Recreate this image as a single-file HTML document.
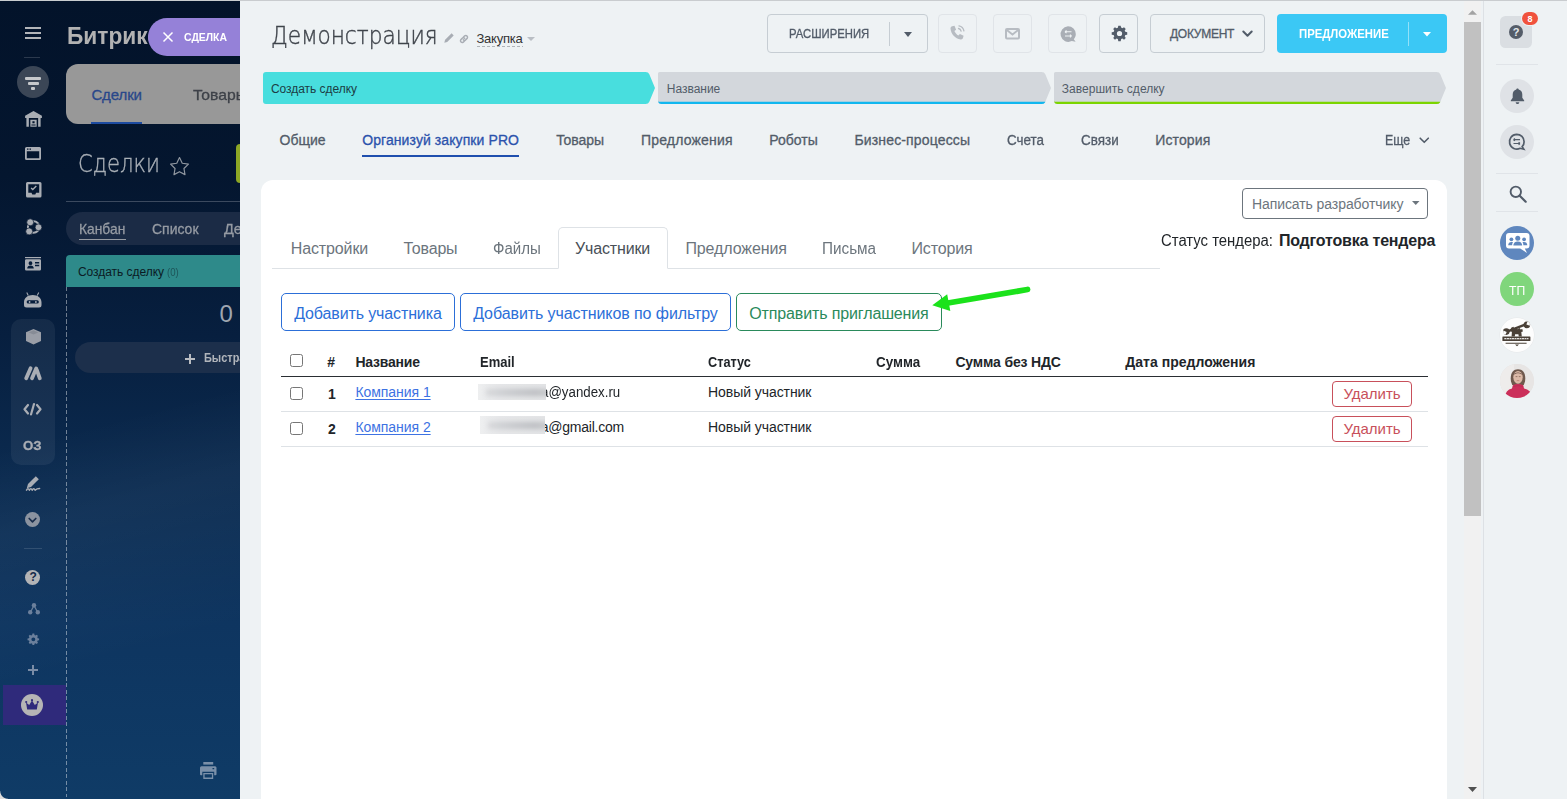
<!DOCTYPE html>
<html lang="ru"><head><meta charset="utf-8"><title>Демонстрация — Сделки</title>
<style>
html,body{margin:0;padding:0}
body{width:1567px;height:799px;overflow:hidden;position:relative;background:#eef2f4;font-family:"Liberation Sans",sans-serif}
.a{position:absolute;box-sizing:border-box}
.t{position:absolute;white-space:pre;display:block}
svg{display:block;overflow:visible}
</style></head><body>
<div class="a" id="left" style="left:0;top:0;width:240px;height:799px;overflow:hidden;background:linear-gradient(180deg,#03132a 0%,#04162f 22%,#071f3f 42%,#0b2b50 60%,#0e3560 78%,#0f3b66 100%)"><div class="a" style="left:0px;top:0px;width:240px;height:799px;background:linear-gradient(165deg,transparent 52%,rgba(255,255,255,.035) 62%,rgba(255,255,255,.02) 70%,transparent 80%)"></div>
<div class="a" style="left:25px;top:27px;width:16px;height:2px;background:#b3b5b9"></div>
<div class="a" style="left:25px;top:32px;width:16px;height:2px;background:#b3b5b9"></div>
<div class="a" style="left:25px;top:37px;width:16px;height:2px;background:#b3b5b9"></div>
<div class="a" style="left:24px;top:57px;width:16px;height:1px;background:rgba(255,255,255,.16)"></div>
<div class="a" style="left:17px;top:66px;width:32px;height:32px;background:#3b4656;border-radius:50%"></div>
<div class="a" style="left:25px;top:77px;width:16px;height:2.6px;background:#c6c8cb;border-radius:1px"></div>
<div class="a" style="left:27.5px;top:82px;width:11px;height:2.6px;background:#c6c8cb;border-radius:1px"></div>
<div class="a" style="left:30.7px;top:87px;width:4.6px;height:2.6px;background:#c6c8cb;border-radius:1px"></div>
<span class="t" style="left:67.00px;top:19.68px;font:700 24px/31px 'Liberation Sans', sans-serif;color:#b2b2b2;transform:scaleX(0.9469);transform-origin:0 50%;">Битрикс</span>
<div class="a" style="left:148px;top:18px;width:112px;height:38px;background:#9581d8;border-radius:19px 0 0 19px"></div>
<svg class="a" style="left:163px;top:32px;" width="10" height="10" viewBox="0 0 10 10"><path d="M0.5 0.5L9.5 9.5M9.5 0.5L0.5 9.5" stroke="#fff" stroke-width="1.5" fill="none"/></svg>
<span class="t" style="left:184.00px;top:30.19px;font:700 11px/14px 'Liberation Sans', sans-serif;color:#fff;transform:scaleX(0.9480);transform-origin:0 50%;">СДЕЛКА</span>
<div class="a" style="left:66px;top:64px;width:194px;height:60px;background:#989898;border-radius:12px 0 0 12px"></div>
<span class="t" style="left:91.40px;top:84.80px;font:400 15px/20px 'Liberation Sans', sans-serif;color:#29478a;letter-spacing:-0.105px;-webkit-text-stroke:.3px;">Сделки</span>
<span class="t" style="left:192.50px;top:84.80px;font:400 15px/20px 'Liberation Sans', sans-serif;color:#3d4148;transform:scaleX(1.0463);transform-origin:0 50%;-webkit-text-stroke:.3px;">Товары</span>
<div class="a" style="left:91px;top:122px;width:51px;height:2px;background:#1d4ba0"></div>
<span class="t" style="left:78.00px;top:147.85px;font:200 25px/32px 'DejaVu Sans', 'Liberation Sans', sans-serif;color:#aab0b7;transform:scaleX(0.8448);transform-origin:0 50%;-webkit-text-stroke:.35px;">Сделки</span>
<svg class="a" style="left:170.2px;top:156.5px;" width="19" height="18.5" viewBox="2 2 20 19.500"><path d="M12 2.6l2.9 6 6.5.9-4.7 4.6 1.1 6.5L12 17.5l-5.8 3.1 1.1-6.5L2.6 9.5l6.5-.9z" fill="none" stroke="#9097a0" stroke-width="1.250" stroke-linejoin="round"/></svg>
<div class="a" style="left:236px;top:144px;width:24px;height:39px;background:#8da725;border-radius:4px 0 0 4px"></div>
<div class="a" style="left:66px;top:201px;width:174px;height:1px;background:rgba(255,255,255,.22)"></div>
<div class="a" style="left:66px;top:212px;width:194px;height:33px;background:#1b2b45;border-radius:16.5px 0 0 16.5px"></div>
<span class="t" style="left:79.30px;top:219.10px;font:400 15px/20px 'Liberation Sans', sans-serif;color:#969ba3;transform:scaleX(0.9214);transform-origin:0 50%;-webkit-text-stroke:.3px;">Канбан</span>
<div class="a" style="left:79px;top:238.5px;width:47px;height:1.5px;background:#969ba3"></div>
<span class="t" style="left:151.80px;top:219.10px;font:400 15px/20px 'Liberation Sans', sans-serif;color:#969ba3;transform:scaleX(0.9315);transform-origin:0 50%;-webkit-text-stroke:.3px;">Список</span>
<span class="t" style="left:224.00px;top:219.10px;font:400 15px/20px 'Liberation Sans', sans-serif;color:#969ba3;transform:scaleX(0.9684);transform-origin:0 50%;-webkit-text-stroke:.3px;">Дела</span>
<div class="a" style="left:66px;top:255px;width:194px;height:32px;background:#2e8a8a;border-radius:4px 0 0 0"></div>
<span class="t" style="left:78.00px;top:264.14px;font:400 12px/16px 'Liberation Sans', sans-serif;color:#0b1b24;letter-spacing:-0.047px;">Создать сделку</span>
<span class="t" style="left:166.70px;top:265.19px;font:400 11px/14px 'Liberation Sans', sans-serif;color:#1d5559;transform:scaleX(0.8697);transform-origin:0 50%;">(0)</span>
<div class="a" style="left:66px;top:287px;width:1px;height:510px;background:repeating-linear-gradient(180deg,rgba(255,255,255,.42) 0 4px,transparent 4px 6.5px)"></div>
<span class="t" style="left:219.60px;top:298.18px;font:400 24px/31px 'Liberation Sans', sans-serif;color:#9fa6b0;">0</span>
<div class="a" style="left:75px;top:342px;width:185px;height:31px;background:#1c2f4b;border-radius:15.5px 0 0 15.5px"></div>
<div class="a" style="left:185px;top:358px;width:10px;height:2px;background:#b9bcc1"></div>
<div class="a" style="left:189px;top:354px;width:2px;height:10px;background:#b9bcc1"></div>
<span class="t" style="left:203.70px;top:350.34px;font:700 12px/16px 'Liberation Sans', sans-serif;color:#b1b5bb;transform:scaleX(0.9121);transform-origin:0 50%;">Быстрая сделка</span>
<div class="a" style="left:11px;top:319px;width:44px;height:146px;background:rgba(255,255,255,.06);border-radius:10px"></div>
<svg class="a" style="left:24.5px;top:110.5px;" width="17" height="15.8" viewBox="0 0 17 16"><path fill="#a9adb4" fill-rule="evenodd" d="M8.500 0L17 4.800V7h-1.300v9H1.300V7H0V4.800zM3.800 7.200V16h9.400V7.200z"/><path fill="#a9adb4" fill-rule="evenodd" d="M5.300 8.800h6.400V16H5.300zM7.400 10.300v2.200h2.200v-2.200zM6.400 13.800v.9h4.200v-.9z"/></svg>
<svg class="a" style="left:25px;top:147px;" width="16" height="13" viewBox="0 0 16 13"><path fill="#a9adb4" fill-rule="evenodd" d="M1.5 0h13A1.5 1.5 0 0116 1.5v10a1.5 1.5 0 01-1.5 1.5h-13A1.5 1.5 0 010 11.500v-10A1.500 1.500 0 011.500 0zM1.800 4.200v7h12.400v-7zM2 1.500v1.300h1.500V1.500zM4.500 1.500v1.300H6V1.500z"/></svg>
<svg class="a" style="left:25.5px;top:181.5px;" width="15.5" height="15.5" viewBox="0 0 15.500 15.500"><path fill="#a9adb4" fill-rule="evenodd" d="M1.500 0h12.500a1.500 1.500 0 011.500 1.500v12.500a1.500 1.500 0 01-1.500 1.500H1.500A1.500 1.500 0 010 14V1.500A1.500 1.500 0 011.500 0zM2.300 2.300v8.500h3.200l.8 1.700h3l.8-1.700h3.100V2.300zM6.800 8.600L4.600 6.400l1-1 1.200 1.200 3-3 1 1z"/></svg>
<svg class="a" style="left:25px;top:218px;" width="17" height="17" viewBox="0 0 17 17"><circle cx="8.600" cy="9" r="5.700" fill="none" stroke="#a9adb4" stroke-width="2.100"/><g fill="#a9adb4" stroke="#04162f" stroke-width=".7"><circle cx="5.200" cy="4.300" r="3.500"/><circle cx="13.500" cy="9.300" r="3.400"/><circle cx="4.200" cy="13.400" r="3.500"/></g></svg>
<svg class="a" style="left:25px;top:257px;" width="16" height="13.5" viewBox="0 0 16 13.500"><path fill="#a9adb4" d="M0 0h16v1.200H0z"/><path fill="#a9adb4" fill-rule="evenodd" d="M1.200 2.300h13.600A1.200 1.200 0 0116 3.500v8.800a1.200 1.200 0 01-1.200 1.200H1.200A1.200 1.200 0 010 12.300V3.500a1.200 1.200 0 011.200-1.200zM5.500 4.300a1.900 1.900 0 100 3.800 1.900 1.900 0 000-3.800zM2.200 11.600h6.600c0-2-1.400-3-3.300-3s-3.300 1-3.300 3zM10 5v1.400h4.200V5zM10 7.800v1.400h4.200V7.800z"/></svg>
<svg class="a" style="left:23.5px;top:291.5px;" width="17.5" height="15.5" viewBox="0 0 17.500 15.500"><path fill="#a9adb4" d="M3.200 0.300l1.500 3-.9.500-1.500-3zM14.300 0.300l-1.500 3 .9.500 1.500-3z"/><path fill="#a9adb4" fill-rule="evenodd" d="M8.750 3c4.800 0 8.750 2.800 8.750 7.300v2.700a2.500 2.500 0 01-2.500 2.500H2.500A2.500 2.500 0 010 13v-2.700C0 5.800 3.950 3 8.750 3zM4.200 8.200a1.500 1.500 0 00-1.500 1.500v.3a1.500 1.500 0 001.500 1.500h9.100a1.500 1.500 0 001.500-1.500v-.3a1.500 1.500 0 00-1.500-1.500zM5.600 9.100a.9.900 0 100 1.800.9.900 0 000-1.800zM11.900 9.100a.9.900 0 100 1.800.9.900 0 000-1.800z"/></svg>
<svg class="a" style="left:25.5px;top:329px;" width="15" height="15.5" viewBox="0 0 15 15.500"><path fill="#9a9ea7" d="M7.500 0L15 3.300v8.700L7.500 15.500 0 12V3.300z"/><path fill="#878c96" d="M7.500 1.300l4.800 2.100-4.800 2.100-4.800-2.100z"/></svg>
<svg class="a" style="left:23.5px;top:365.5px;" width="18" height="14.5" viewBox="0 0 18 14.500"><g stroke="#a9adb4" stroke-width="3.800" stroke-linecap="round" fill="none"><path d="M2.200 12.300L6.600 2.200"/><path d="M8 12.300L12.200 2.400"/><path d="M12.800 3.800L15.800 12.300"/></g></svg>
<svg class="a" style="left:23px;top:403px;" width="19" height="12.5" viewBox="0 0 19 12.500"><g stroke="#a9adb4" stroke-width="2.200" fill="none" stroke-linecap="round" stroke-linejoin="round"><path d="M5 2L1.500 6.250 5 10.500"/><path d="M14 2l3.500 4.250L14 10.500"/><path d="M11 1L8 11.500"/></g></svg>
<span class="t" style="left:22.80px;top:436.52px;font:700 13.5px/18px 'Liberation Sans', sans-serif;color:#a9adb4;transform:scaleX(0.9806);transform-origin:0 50%;-webkit-text-stroke:.3px;">ОЗ</span>
<svg class="a" style="left:25px;top:476px;" width="16" height="15" viewBox="0 0 16 15"><path fill="#a9adb4" d="M10.800 0.200l3 3L6 11 1.800 12.200 3 8z"/><path fill="none" stroke="#a9adb4" stroke-width="1.500" stroke-linecap="round" stroke-linejoin="round" d="M1.500 14.200c1-1.900 2-1.900 2.900 0 1-1.900 1.900-1.900 2.800 0 1-1.900 2-1.900 2.900 0 1.300-1.200 2.700-1.600 4.500-1.600"/></svg>
<div class="a" style="left:25px;top:512px;width:15px;height:15px;background:#8b93a0;border-radius:50%"></div>
<svg class="a" style="left:28px;top:516.5px;" width="9" height="6.5" viewBox="0 0 9 6.500"><path d="M1.200 1.500L4.500 4.800 7.800 1.500" fill="none" stroke="#1a2e4c" stroke-width="1.700" stroke-linecap="round" stroke-linejoin="round"/></svg>
<div class="a" style="left:24px;top:548px;width:18px;height:1px;background:rgba(255,255,255,.13)"></div>
<div class="a" style="left:25px;top:569.5px;width:15px;height:15px;background:#b3b4b6;border-radius:50%"></div>
<span class="t" style="left:29.50px;top:569.14px;font:700 12px/16px 'Liberation Sans', sans-serif;color:#12294a;">?</span>
<svg class="a" style="left:27.5px;top:602.5px;" width="12" height="11.5" viewBox="0 0 12 11.500"><g fill="#6c809c"><circle cx="6" cy="2.300" r="2.200"/><circle cx="2.200" cy="9.200" r="2.200"/><circle cx="9.800" cy="9.200" r="2.200"/></g><path d="M6 2.500L2.500 9M6 2.500L9.500 9" stroke="#6c809c" stroke-width="1.300" fill="none"/></svg>
<svg class="a" style="left:26.8px;top:632.8px;" width="12.7" height="12.7" viewBox="0 0 24 24"><path fill="#6c809c" fill-rule="evenodd" d="M10.300 1h3.400l.5 2.700c.7.200 1.300.5 1.900.9l2.300-1.500 2.400 2.400-1.500 2.300c.4.600.7 1.200.9 1.900l2.700.5v3.400l-2.700.5c-.2.700-.5 1.300-.9 1.900l1.500 2.300-2.400 2.400-2.300-1.500c-.6.400-1.200.7-1.900.9l-.5 2.700h-3.400l-.5-2.700c-.7-.2-1.300-.5-1.900-.9l-2.300 1.500-2.400-2.400 1.500-2.300c-.4-.6-.7-1.200-.9-1.900L1 13.700v-3.400l2.700-.5c.2-.7.5-1.300.9-1.900L3.100 5.600l2.400-2.400 2.300 1.500c.6-.4 1.200-.7 1.900-.9zM12 8.300a3.700 3.700 0 100 7.400 3.700 3.700 0 000-7.400z"/></svg>
<div class="a" style="left:28px;top:669px;width:10px;height:1.5px;background:#7a8ca6"></div>
<div class="a" style="left:32.25px;top:665px;width:1.5px;height:10px;background:#7a8ca6"></div>
<div class="a" style="left:3px;top:685px;width:63px;height:40px;background:#2f2a7b"></div>
<div class="a" style="left:21px;top:694px;width:22px;height:22px;background:#b5b5b5;border-radius:50%"></div>
<svg class="a" style="left:25px;top:698.5px;" width="14" height="12" viewBox="0 0 14 12"><path fill="#2f2a7b" d="M1 3.500l3.200 2.600L7 1.500l2.800 4.600L13 3.500l-1.200 7H2.200z"/><circle cx="1.200" cy="3" r="1.100" fill="#2f2a7b"/><circle cx="7" cy="1.200" r="1.100" fill="#2f2a7b"/><circle cx="12.800" cy="3" r="1.100" fill="#2f2a7b"/></svg>
<svg class="a" style="left:200px;top:762px;" width="16.5" height="17" viewBox="0 0 16.500 17"><g fill="#7b90a9"><path d="M3.300 0h9.900v2.600H3.300z"/><path fill-rule="evenodd" d="M1.500 4.300h13.500a1.500 1.500 0 011.500 1.500v6.400a1 1 0 01-1 1h-1.300V9.800H2.300v3.400H1a1 1 0 01-1-1V5.800a1.500 1.500 0 011.500-1.500zM12.500 6v1.200h1.700V6z"/><path fill-rule="evenodd" d="M3.300 11h9.900v6H3.300zM4.600 12.300v3.200h7.300v-3.200z"/></g></svg>
<div class="a" style="left:0px;top:791px;width:8px;height:8px;background:radial-gradient(circle at 100% 0,transparent 7.300px,#dcdcdc 8.200px)"></div></div>
<div class="a" id="main" style="left:0;top:0;width:1484px;height:799px;overflow:hidden;pointer-events:none"><span class="t" style="left:271.20px;top:20.50px;font:200 24px/31px 'DejaVu Sans', 'Liberation Sans', sans-serif;color:#3f444b;transform:scaleX(0.9022);transform-origin:0 50%;-webkit-text-stroke:.4px;">Демонстрация</span>
<svg class="a" style="left:443.5px;top:33px;" width="10" height="10" viewBox="0 0 10 10"><path fill="#a8adb4" d="M7.600 0.300l2.100 2.100-6.500 6.500L0.300 9.700l.8-2.900z"/></svg>
<svg class="a" style="left:459px;top:33.5px;" width="10" height="10" viewBox="0 0 10 10"><g fill="none" stroke="#a8adb4" stroke-width="1.500" stroke-linecap="round"><path d="M4.300 3.200l1.400-1.400a1.800 1.800 0 012.500 2.500L6.800 5.700a1.800 1.800 0 01-2.500 0"/><path d="M5.700 6.800L4.300 8.200a1.800 1.800 0 01-2.500-2.500l1.400-1.400a1.800 1.800 0 012.500 0"/></g></svg>
<span class="t" style="left:476.50px;top:29.90px;font:400 13px/17px 'Liberation Sans', sans-serif;color:#333;letter-spacing:-0.229px;">Закупка</span>
<div class="a" style="left:476.5px;top:45.5px;width:46.5px;height:1px;background:repeating-linear-gradient(90deg,#b0b4b8 0 3px,transparent 3px 5px)"></div>
<svg class="a" style="left:527px;top:37px;" width="8" height="4" viewBox="0 0 8 4"><path d="M0 0h8L4 4z" fill="#b9bec4"/></svg>
<div class="a" style="left:767px;top:14px;width:161px;height:39px;border:1px solid #c6cdd3;border-radius:4px;"></div>
<span class="t" style="left:788.60px;top:26.04px;font:400 12px/16px 'Liberation Sans', sans-serif;color:#525c69;transform:scaleX(0.9413);transform-origin:0 50%;-webkit-text-stroke:.3px;">РАСШИРЕНИЯ</span>
<div class="a" style="left:889px;top:21.5px;width:1px;height:24.5px;background:#c6cdd3"></div>
<svg class="a" style="left:904px;top:31.5px;" width="8" height="5" viewBox="0 0 8 5"><path d="M0 0h8L4 5z" fill="#525c69"/></svg>
<div class="a" style="left:938px;top:14px;width:39px;height:39px;border:1px solid #e0e4e8;border-radius:4px;"></div>
<svg class="a" style="left:949px;top:25px;" width="16" height="17" viewBox="0 0 16 17"><path fill="#b7bcc2" d="M3.200 1.200L5.500 0.800l1.600 3.900-1.700 1.300c.8 1.900 2.200 3.500 4 4.500l1.500-1.600 3.700 1.900-.6 2.300c-.3 1-1.300 1.500-2.300 1.300C6 13.500 2 9.300 1.500 3.500 1.400 2.500 2.100 1.500 3.200 1.200z"/><g fill="none" stroke="#b7bcc2" stroke-width="1.300" stroke-linecap="round"><path d="M9.500 3.500c1.300.3 2.300 1.300 2.600 2.600"/><path d="M10 0.900c2.500.5 4.400 2.400 4.900 4.900"/></g></svg>
<div class="a" style="left:993px;top:14px;width:39px;height:39px;border:1px solid #e0e4e8;border-radius:4px;"></div>
<svg class="a" style="left:1005px;top:27.5px;" width="15" height="11.5" viewBox="0 0 15 11.500"><rect x="1" y="1" width="13" height="9.500" rx="1" fill="none" stroke="#b7bcc2" stroke-width="2"/><path d="M1.500 1.800l6 4.700 6-4.700" fill="none" stroke="#b7bcc2" stroke-width="1.800"/></svg>
<div class="a" style="left:1048px;top:14px;width:38.5px;height:39px;border:1px solid #e0e4e8;border-radius:4px;"></div>
<svg class="a" style="left:1059.5px;top:25.5px;" width="16.5" height="16.5" viewBox="0 0 16.500 16.500"><path fill="#a9aeb5" d="M8 0.300a7.800 7.800 0 017.800 7.800c0 2-.7 3.800-2 5.200l1.800 2.500-3.800-.7A7.800 7.800 0 118 0.300z"/><g stroke="#eef2f4" stroke-width="1.100" fill="none"><path d="M5 5.800h6.500M5 5.800l1.500-1.300M5 5.800l1.500 1.300"/><path d="M11.500 10H5M11.500 10L10 8.700M11.500 10L10 11.300"/></g></svg>
<div class="a" style="left:1099px;top:14px;width:38.5px;height:39px;border:1px solid #c6cdd3;border-radius:4px;"></div>
<svg class="a" style="left:1110.5px;top:24.9px;" width="17" height="17" viewBox="0 0 24 24"><path fill="#525c69" fill-rule="evenodd" d="M10.300 1h3.400l.5 2.700c.7.200 1.300.5 1.900.9l2.300-1.500 2.400 2.400-1.500 2.300c.4.600.7 1.200.9 1.900l2.700.5v3.400l-2.700.5c-.2.700-.5 1.300-.9 1.900l1.500 2.300-2.400 2.400-2.300-1.500c-.6.400-1.200.7-1.900.9l-.5 2.700h-3.400l-.5-2.700c-.7-.2-1.300-.5-1.900-.9l-2.300 1.500-2.400-2.400 1.500-2.300c-.4-.6-.7-1.200-.9-1.900L1 13.700v-3.400l2.700-.5c.2-.7.5-1.300.9-1.900L3.100 5.600l2.400-2.400 2.300 1.500c.6-.4 1.200-.7 1.900-.9zM12 8.300a3.700 3.700 0 100 7.400 3.700 3.700 0 000-7.400z"/></svg>
<div class="a" style="left:1150px;top:14px;width:115px;height:39px;border:1px solid #c6cdd3;border-radius:4px;"></div>
<span class="t" style="left:1170.00px;top:26.04px;font:400 12px/16px 'Liberation Sans', sans-serif;color:#525c69;letter-spacing:-0.260px;-webkit-text-stroke:.3px;">ДОКУМЕНТ</span>
<svg class="a" style="left:1241.5px;top:30px;" width="11" height="8" viewBox="0 0 11 8"><path d="M1.300 1.500L5.500 5.800 9.700 1.500" fill="none" stroke="#525c69" stroke-width="2" stroke-linecap="round" stroke-linejoin="round"/></svg>
<div class="a" style="left:1277px;top:14px;width:170px;height:39px;background:#3bc8f5;border-radius:4px"></div>
<span class="t" style="left:1298.60px;top:26.04px;font:700 12px/16px 'Liberation Sans', sans-serif;color:#fff;transform:scaleX(0.9450);transform-origin:0 50%;">ПРЕДЛОЖЕНИЕ</span>
<div class="a" style="left:1408px;top:22px;width:1px;height:24px;background:rgba(255,255,255,.45)"></div>
<svg class="a" style="left:1423px;top:32px;" width="8" height="4.5" viewBox="0 0 8 4.500"><path d="M0 0h8L4 4.500z" fill="#fff"/></svg>
<svg class="a" style="left:263px;top:72px;" width="392" height="32" viewBox="0 0 392 32"><path d="M3 0H382.5 Q385.5 0 386.3 2.200 L392 16 L386.3 29.800 Q385.5 32 382.5 32 H3 Q0 32 0 29 V3 Q0 0 3 0z" fill="#48dede"/></svg>
<span class="t" style="left:271.00px;top:80.84px;font:400 12px/16px 'Liberation Sans', sans-serif;color:#1c3d44;letter-spacing:-0.047px;">Создать сделку</span>
<svg class="a" style="left:658px;top:72px;" width="393" height="32" viewBox="0 0 393 32"><path d="M1.5 0H383.5 Q386.5 0 387.3 2.200 L393 16 L387.3 29.800 Q386.5 32 383.5 32 H3 Q0 32 0 29 V1.5 Q0 0 1.5 0z" fill="#d3d7dc"/><path d="M0 28.500 Q0.300 32 3.500 32 H383.5 Q386 32 387 30.500 L387.3 29.800 H0.600z" fill="#11b7ef"/></svg>
<span class="t" style="left:666.80px;top:80.84px;font:400 12px/16px 'Liberation Sans', sans-serif;color:#525c69;letter-spacing:-0.018px;">Название</span>
<svg class="a" style="left:1054px;top:72px;" width="392" height="32" viewBox="0 0 392 32"><path d="M1.5 0H382.5 Q385.5 0 386.3 2.200 L392 16 L386.3 29.800 Q385.5 32 382.5 32 H3 Q0 32 0 29 V1.5 Q0 0 1.5 0z" fill="#d3d7dc"/><path d="M0 28.500 Q0.300 32 3.500 32 H382.5 Q385 32 386 30.500 L386.3 29.800 H0.600z" fill="#7bd500"/></svg>
<span class="t" style="left:1061.80px;top:80.84px;font:400 12px/16px 'Liberation Sans', sans-serif;color:#525c69;letter-spacing:0.014px;">Завершить сделку</span>
<span class="t" style="left:279.50px;top:131.15px;font:400 14px/18px 'Liberation Sans', sans-serif;color:#525c69;letter-spacing:-0.012px;-webkit-text-stroke:.3px;">Общие</span>
<span class="t" style="left:362.20px;top:131.15px;font:400 14px/18px 'Liberation Sans', sans-serif;color:#2b52ac;letter-spacing:0.088px;-webkit-text-stroke:.3px;">Организуй закупки PRO</span>
<div class="a" style="left:362px;top:155px;width:157px;height:2px;background:#1f4fae"></div>
<span class="t" style="left:556.20px;top:131.15px;font:400 14px/18px 'Liberation Sans', sans-serif;color:#525c69;letter-spacing:-0.034px;-webkit-text-stroke:.3px;">Товары</span>
<span class="t" style="left:641.00px;top:131.15px;font:400 14px/18px 'Liberation Sans', sans-serif;color:#525c69;letter-spacing:0.175px;-webkit-text-stroke:.3px;">Предложения</span>
<span class="t" style="left:769.30px;top:131.15px;font:400 14px/18px 'Liberation Sans', sans-serif;color:#525c69;letter-spacing:-0.017px;-webkit-text-stroke:.3px;">Роботы</span>
<span class="t" style="left:854.50px;top:131.15px;font:400 14px/18px 'Liberation Sans', sans-serif;color:#525c69;letter-spacing:0.144px;-webkit-text-stroke:.3px;">Бизнес-процессы</span>
<span class="t" style="left:1007.00px;top:131.15px;font:400 14px/18px 'Liberation Sans', sans-serif;color:#525c69;transform:scaleX(0.9583);transform-origin:0 50%;-webkit-text-stroke:.3px;">Счета</span>
<span class="t" style="left:1080.50px;top:131.15px;font:400 14px/18px 'Liberation Sans', sans-serif;color:#525c69;transform:scaleX(0.9613);transform-origin:0 50%;-webkit-text-stroke:.3px;">Связи</span>
<span class="t" style="left:1155.30px;top:131.15px;font:400 14px/18px 'Liberation Sans', sans-serif;color:#525c69;letter-spacing:0.117px;-webkit-text-stroke:.3px;">История</span>
<span class="t" style="left:1385.20px;top:131.15px;font:400 14px/18px 'Liberation Sans', sans-serif;color:#525c69;transform:scaleX(0.8842);transform-origin:0 50%;-webkit-text-stroke:.3px;">Еще</span>
<svg class="a" style="left:1418.5px;top:136.5px;" width="10.5" height="7" viewBox="0 0 10.500 7"><path d="M1.200 1.200L5.250 5.300 9.300 1.200" fill="none" stroke="#525c69" stroke-width="1.600" stroke-linecap="round" stroke-linejoin="round"/></svg>
<div class="a" style="left:261px;top:180px;width:1186px;height:640px;background:#fff;border-radius:12px 12px 0 0"></div>
<div class="a" style="left:1242px;top:188px;width:186px;height:31px;border:1px solid #6c757d;border-radius:4px"></div>
<span class="t" style="left:1252.00px;top:194.85px;font:400 14px/18px 'Liberation Sans', sans-serif;color:#6c757d;letter-spacing:-0.085px;">Написать разработчику</span>
<svg class="a" style="left:1411.5px;top:201px;" width="7.5" height="4" viewBox="0 0 7.500 4"><path d="M0 0h7.500L3.750 4z" fill="#6c757d"/></svg>
<span class="t" style="left:1161.00px;top:229.56px;font:400 16px/21px 'Liberation Sans', sans-serif;color:#212529;transform:scaleX(0.9303);transform-origin:0 50%;">Статус тендера:</span>
<span class="t" style="left:1278.90px;top:229.56px;font:700 16px/21px 'Liberation Sans', sans-serif;color:#212529;letter-spacing:-0.186px;">Подготовка тендера</span>
<div class="a" style="left:272px;top:268px;width:888px;height:1px;background:#dee2e6"></div>
<div class="a" style="left:558px;top:227px;width:110px;height:42px;border:1px solid #dee2e6;border-bottom:1px solid #fff;border-radius:5px 5px 0 0;background:#fff"></div>
<span class="t" style="left:290.70px;top:237.76px;font:400 16px/21px 'Liberation Sans', sans-serif;color:#6c757d;letter-spacing:-0.107px;">Настройки</span>
<span class="t" style="left:403.50px;top:237.76px;font:400 16px/21px 'Liberation Sans', sans-serif;color:#6c757d;letter-spacing:-0.189px;">Товары</span>
<span class="t" style="left:492.50px;top:237.76px;font:400 16px/21px 'Liberation Sans', sans-serif;color:#6c757d;transform:scaleX(0.9401);transform-origin:0 50%;">Файлы</span>
<span class="t" style="left:575.00px;top:237.76px;font:400 16px/21px 'Liberation Sans', sans-serif;color:#495057;letter-spacing:-0.142px;">Участники</span>
<span class="t" style="left:685.40px;top:237.76px;font:400 16px/21px 'Liberation Sans', sans-serif;color:#6c757d;letter-spacing:-0.096px;">Предложения</span>
<span class="t" style="left:822.20px;top:237.76px;font:400 16px/21px 'Liberation Sans', sans-serif;color:#6c757d;transform:scaleX(0.9546);transform-origin:0 50%;">Письма</span>
<span class="t" style="left:911.50px;top:237.76px;font:400 16px/21px 'Liberation Sans', sans-serif;color:#6c757d;letter-spacing:-0.141px;">История</span>
<div class="a" style="left:281px;top:293px;width:174px;height:38px;border:1px solid #2c6fd8;border-radius:5px"></div>
<span class="t" style="left:294.20px;top:302.66px;font:400 16px/21px 'Liberation Sans', sans-serif;color:#2c6fd8;letter-spacing:-0.126px;">Добавить участника</span>
<div class="a" style="left:460px;top:293px;width:271px;height:38px;border:1px solid #2c6fd8;border-radius:5px"></div>
<span class="t" style="left:473.20px;top:302.66px;font:400 16px/21px 'Liberation Sans', sans-serif;color:#2c6fd8;letter-spacing:-0.083px;">Добавить участников по фильтру</span>
<div class="a" style="left:736px;top:293px;width:206px;height:38px;border:1px solid #2a8a5b;border-radius:5px"></div>
<span class="t" style="left:749.30px;top:302.66px;font:400 16px/21px 'Liberation Sans', sans-serif;color:#2a8a5b;letter-spacing:-0.134px;">Отправить приглашения</span>
<svg class="a" style="left:925px;top:280px;" width="110" height="40" viewBox="925 280 110 40"><path d="M1027.500 289.500L945 303.500" stroke="#1be21b" stroke-width="5.800" stroke-linecap="round" fill="none"/><path d="M932.300 305.300L947.200 294.200L950.300 311z" fill="#1be21b"/></svg>
<div class="a" style="left:290px;top:354px;width:13px;height:13px;border:1px solid #767676;border-radius:2.500px;background:#fff"></div>
<span class="t" style="left:327.20px;top:353.15px;font:700 14px/18px 'Liberation Sans', sans-serif;color:#212529;">#</span>
<span class="t" style="left:355.40px;top:353.15px;font:700 14px/18px 'Liberation Sans', sans-serif;color:#212529;letter-spacing:-0.213px;">Название</span>
<span class="t" style="left:480.30px;top:353.15px;font:700 14px/18px 'Liberation Sans', sans-serif;color:#212529;transform:scaleX(0.9288);transform-origin:0 50%;">Email</span>
<span class="t" style="left:707.90px;top:353.15px;font:700 14px/18px 'Liberation Sans', sans-serif;color:#212529;transform:scaleX(0.9091);transform-origin:0 50%;">Статус</span>
<span class="t" style="left:875.80px;top:353.15px;font:700 14px/18px 'Liberation Sans', sans-serif;color:#212529;transform:scaleX(0.9602);transform-origin:0 50%;">Сумма</span>
<span class="t" style="left:955.40px;top:353.15px;font:700 14px/18px 'Liberation Sans', sans-serif;color:#212529;letter-spacing:-0.151px;">Сумма без НДС</span>
<span class="t" style="left:1125.30px;top:353.15px;font:700 14px/18px 'Liberation Sans', sans-serif;color:#212529;letter-spacing:0.019px;">Дата предложения</span>
<div class="a" style="left:281px;top:376px;width:1147px;height:1.3px;background:#2a2e33"></div>
<div class="a" style="left:290px;top:387px;width:13px;height:13px;border:1px solid #767676;border-radius:2.500px;background:#fff"></div>
<span class="t" style="left:328.00px;top:385.45px;font:700 14px/18px 'Liberation Sans', sans-serif;color:#212529;">1</span>
<span class="t" style="left:355.40px;top:383.15px;font:400 14px/18px 'Liberation Sans', sans-serif;color:#3d72e3;letter-spacing:-0.050px;text-decoration:underline;text-underline-offset:1.500px;">Компания 1</span>
<span class="t" style="left:540.80px;top:383.15px;font:400 14px/18px 'Liberation Sans', sans-serif;color:#212529;transform:scaleX(0.9487);transform-origin:0 50%;">a@yandex.ru</span>
<div class="a" style="left:478px;top:384px;width:68px;height:16.3px;overflow:hidden;background:linear-gradient(90deg,#eeeff0,#e6e7e9 30%,#e3e4e6 100%)"><div class="a" style="left:8px;right:-6px;top:5.15px;height:7px;background:linear-gradient(90deg,#d6d7da,#c6c8cb 40%,#bcbec2 75%,#c9cbce);filter:blur(2.600px)"></div></div>
<span class="t" style="left:708.00px;top:383.15px;font:400 14px/18px 'Liberation Sans', sans-serif;color:#212529;letter-spacing:-0.060px;">Новый участник</span>
<div class="a" style="left:1332px;top:381px;width:80px;height:26px;border:1px solid #c8505b;border-radius:4px"></div>
<span class="t" style="left:1343.40px;top:384.10px;font:400 15px/20px 'Liberation Sans', sans-serif;color:#c8505b;letter-spacing:-0.014px;">Удалить</span>
<div class="a" style="left:281px;top:411px;width:1147px;height:1px;background:#dee2e6"></div>
<div class="a" style="left:290px;top:422px;width:13px;height:13px;border:1px solid #767676;border-radius:2.500px;background:#fff"></div>
<span class="t" style="left:328.00px;top:420.45px;font:700 14px/18px 'Liberation Sans', sans-serif;color:#212529;">2</span>
<span class="t" style="left:355.40px;top:418.15px;font:400 14px/18px 'Liberation Sans', sans-serif;color:#3d72e3;letter-spacing:-0.050px;text-decoration:underline;text-underline-offset:1.500px;">Компания 2</span>
<span class="t" style="left:540.80px;top:418.15px;font:400 14px/18px 'Liberation Sans', sans-serif;color:#212529;letter-spacing:-0.240px;">a@gmail.com</span>
<div class="a" style="left:479.5px;top:416px;width:65.5px;height:18px;overflow:hidden;background:linear-gradient(90deg,#eeeff0,#e6e7e9 30%,#e3e4e6 100%)"><div class="a" style="left:8px;right:-6px;top:6px;height:7px;background:linear-gradient(90deg,#d6d7da,#c6c8cb 40%,#bcbec2 75%,#c9cbce);filter:blur(2.600px)"></div></div>
<span class="t" style="left:708.00px;top:418.15px;font:400 14px/18px 'Liberation Sans', sans-serif;color:#212529;letter-spacing:-0.060px;">Новый участник</span>
<div class="a" style="left:1332px;top:416px;width:80px;height:26px;border:1px solid #c8505b;border-radius:4px"></div>
<span class="t" style="left:1343.40px;top:419.10px;font:400 15px/20px 'Liberation Sans', sans-serif;color:#c8505b;letter-spacing:-0.014px;">Удалить</span>
<div class="a" style="left:281px;top:446px;width:1147px;height:1px;background:#dee2e6"></div>
<div class="a" style="left:1464px;top:1px;width:17px;height:798px;background:#f1f1f1"></div>
<div class="a" style="left:1464px;top:22px;width:17px;height:494px;background:#c1c1c1"></div>
<svg class="a" style="left:1468px;top:10px;" width="9" height="4.8" viewBox="0 0 9 4.500"><path d="M0 4.500h9L4.500 0z" fill="#a3a3a3"/></svg>
<svg class="a" style="left:1468px;top:787px;" width="9" height="5" viewBox="0 0 9 5"><path d="M0 0h9L4.500 5z" fill="#505050"/></svg></div>
<div class="a" style="left:1483px;top:0px;width:1px;height:799px;background:#dde1e5"></div>
<div class="a" style="left:1500px;top:16px;width:32px;height:32px;background:#dadee2;border-radius:5.500px"></div>
<div class="a" style="left:1508.6px;top:24.5px;width:14.6px;height:14.6px;background:#545c68;border-radius:50%"></div>
<span class="t" style="left:1512.70px;top:25.09px;font:700 11px/14px 'Liberation Sans', sans-serif;color:#e4e8eb;">?</span>
<div class="a" style="left:1522px;top:12px;width:16px;height:13px;background:#f0523d;border-radius:6.500px;box-shadow:0 0 0 1px #eef2f4"></div>
<span class="t" style="left:1527.50px;top:12.78px;font:700 9px/12px 'Liberation Sans', sans-serif;color:#fff;">8</span>
<div class="a" style="left:1495.5px;top:64px;width:42px;height:1px;background:#e0e4e8"></div>
<div class="a" style="left:1500px;top:79px;width:34px;height:34px;background:#dfe2e6;border-radius:50%"></div>
<svg class="a" style="left:1509.5px;top:87.5px;" width="15" height="17" viewBox="0 0 15 17"><path fill="#525c69" d="M7.500 0.500c.7 0 1.200.5 1.200 1.100 2.300.6 3.600 2.600 3.600 5v3.200l1.900 2.600v.8H.8v-.8l1.900-2.600V6.600c0-2.400 1.300-4.400 3.600-5 0-.6.500-1.100 1.200-1.100zM5.700 14.300h3.600c0 1-.8 1.800-1.800 1.800s-1.800-.8-1.800-1.800z"/></svg>
<div class="a" style="left:1500px;top:125px;width:34px;height:34px;background:#dfe2e6;border-radius:50%"></div>
<svg class="a" style="left:1508px;top:133px;" width="18" height="18" viewBox="0 0 18 18"><path fill="none" stroke="#525c69" stroke-width="1.700" d="M8.700 1.300a7.400 7.400 0 017.400 7.400c0 1.900-.7 3.600-1.900 4.900l1.600 2.600-3.600-.9A7.400 7.400 0 118.700 1.300z"/><g stroke="#525c69" stroke-width="1.200" fill="none"><path d="M5.500 6.700h6.500M5.500 6.700l1.400-1.200M5.500 6.700l1.400 1.200"/><path d="M12 10.500H5.500M12 10.500l-1.400-1.200M12 10.500l-1.400 1.200"/></g></svg>
<div class="a" style="left:1495.5px;top:173px;width:42px;height:1px;background:#e0e4e8"></div>
<svg class="a" style="left:1508.5px;top:185px;" width="18" height="18" viewBox="0 0 18 18"><circle cx="6.800" cy="6.800" r="5.200" fill="none" stroke="#525c69" stroke-width="1.900"/><path d="M10.700 10.700l6 6" stroke="#525c69" stroke-width="2.200" stroke-linecap="round"/></svg>
<div class="a" style="left:1495.5px;top:211px;width:42px;height:1px;background:#e0e4e8"></div>
<div class="a" style="left:1500px;top:226px;width:34px;height:34px;background:#5f87be;border-radius:50%"></div>
<svg class="a" style="left:1505.5px;top:233px;" width="23.5" height="21" viewBox="0 0 23.500 21"><path fill="#fff" d="M3 0h17.500a3 3 0 013 3v9.500a3 3 0 01-3 3h-1.700l2.200 4.500-6.800-4.500H3a3 3 0 01-3-3V3a3 3 0 013-3z"/><g fill="#5f87be"><circle cx="11.750" cy="5.300" r="2.500"/><path d="M7.300 12.600c0-2.700 1.800-4.200 4.450-4.200s4.450 1.500 4.450 4.200z"/><circle cx="5.400" cy="6.300" r="1.900"/><path d="M2.200 12.200c0-2.100 1.300-3.300 3.200-3.300.6 0 1.100.1 1.600.4-.6.800-.9 1.800-.9 2.900z"/><circle cx="18.100" cy="6.300" r="1.900"/><path d="M21.300 12.200c0-2.100-1.300-3.300-3.200-3.300-.6 0-1.100.1-1.600.4.600.8.900 1.800.9 2.900z"/></g></svg>
<div class="a" style="left:1500px;top:271.5px;width:34px;height:34px;background:#80d67c;border-radius:50%"></div>
<span class="t" style="left:1508.90px;top:282.10px;font:400 13px/17px 'Liberation Sans', sans-serif;color:#fff;transform:scaleX(0.9366);transform-origin:0 50%;">ТП</span>
<div class="a" style="left:1500px;top:318px;width:34px;height:34px;background:#fdfdfd;border-radius:50%;box-shadow:0 0 0 .5px #e6e8ea"></div>
<svg class="a" style="left:1500px;top:318px;" width="34" height="34" viewBox="0 0 34 34"><g fill="#4a4037"><path d="M7.500 14.800L25.500 7.800l-.9-2.300L6.600 12.500z"/><circle cx="6.300" cy="13.600" r="3.300"/><circle cx="26.800" cy="6.900" r="3.300"/><path d="M11.500 9.500l2-.8.600 1.500 2.300-1 .8 2 2.500-1.300.9 1.700 1.700-.5.600 2.300-1.600.7.500 4.300h-3l-.4-2.200h-3.300l-.3 2.200h-3.200l.3-4.500-2-1.300z"/><rect x="2.400" y="18.500" width="28" height="4.400" rx=".5"/><path d="M5.600 24.800h21v.9h-21zM15 26.600h4l-2 1.700z"/></g><g fill="#fdfdfd"><path d="M3.300 12.600l3.400 1.300-1.100 2.700-2.500-.6z"/><path d="M29.900 7.800l-3.500-1.200 1-2.800 2.500.7z"/><path d="M4.300 20h24.200v1.300H4.300z" opacity=".85"/></g><g fill="#4a4037"><path d="M6.500 19.900h.5v1.500h-.5zM9 19.900h.5v1.500H9zM11.500 19.900h.5v1.500h-.5zM14 19.900h.5v1.500H14zM16.500 19.900h.5v1.500h-.5zM19 19.900h.5v1.500H19zM21.500 19.900h.5v1.500h-.5zM24 19.900h.5v1.500H24zM26.300 19.900h.5v1.500h-.5z"/></g></svg>
<div class="a" style="left:1500px;top:364px;width:34px;height:34px;border-radius:50%;overflow:hidden;background:#e6e4e3"><svg width="34" height="34" viewBox="0 0 34 34"><rect width="34" height="34" fill="#e7e5e4"/><rect width="14" height="34" fill="#eeeceb"/><path d="M11 17.500C9.800 9.500 13 5.300 18 5.300s8.200 4.200 7 12.200l-1.200 3.500H12.200z" fill="#6f594d"/><ellipse cx="18" cy="13.300" rx="4.700" ry="6.400" fill="#dcb9a7"/><path d="M13.200 11.200c.8-3.600 8.500-3.900 9.600 0-1.900-1.500-3.300-1.900-4.800-1.900s-2.900.4-4.800 1.900z" fill="#6a5246"/><path d="M15.600 12.600h1.800M18.800 12.600h1.800" stroke="#7a5a4c" stroke-width=".7"/><path d="M16.700 16.600h2.600" stroke="#b9766d" stroke-width=".7"/><path d="M12.800 21.200Q18 19 23.300 21.200L24 24.600Q31.500 26 32.500 34H4.500Q5.500 26 12 24.600z" fill="#cb2f5a"/><path d="M13.500 22.500Q18 20.800 22.600 22.500" stroke="#b42850" stroke-width=".6" fill="none"/></svg></div>
<div class="a" style="left:0px;top:0px;width:1567px;height:1px;background:#c9cccf"></div>
</body></html>
